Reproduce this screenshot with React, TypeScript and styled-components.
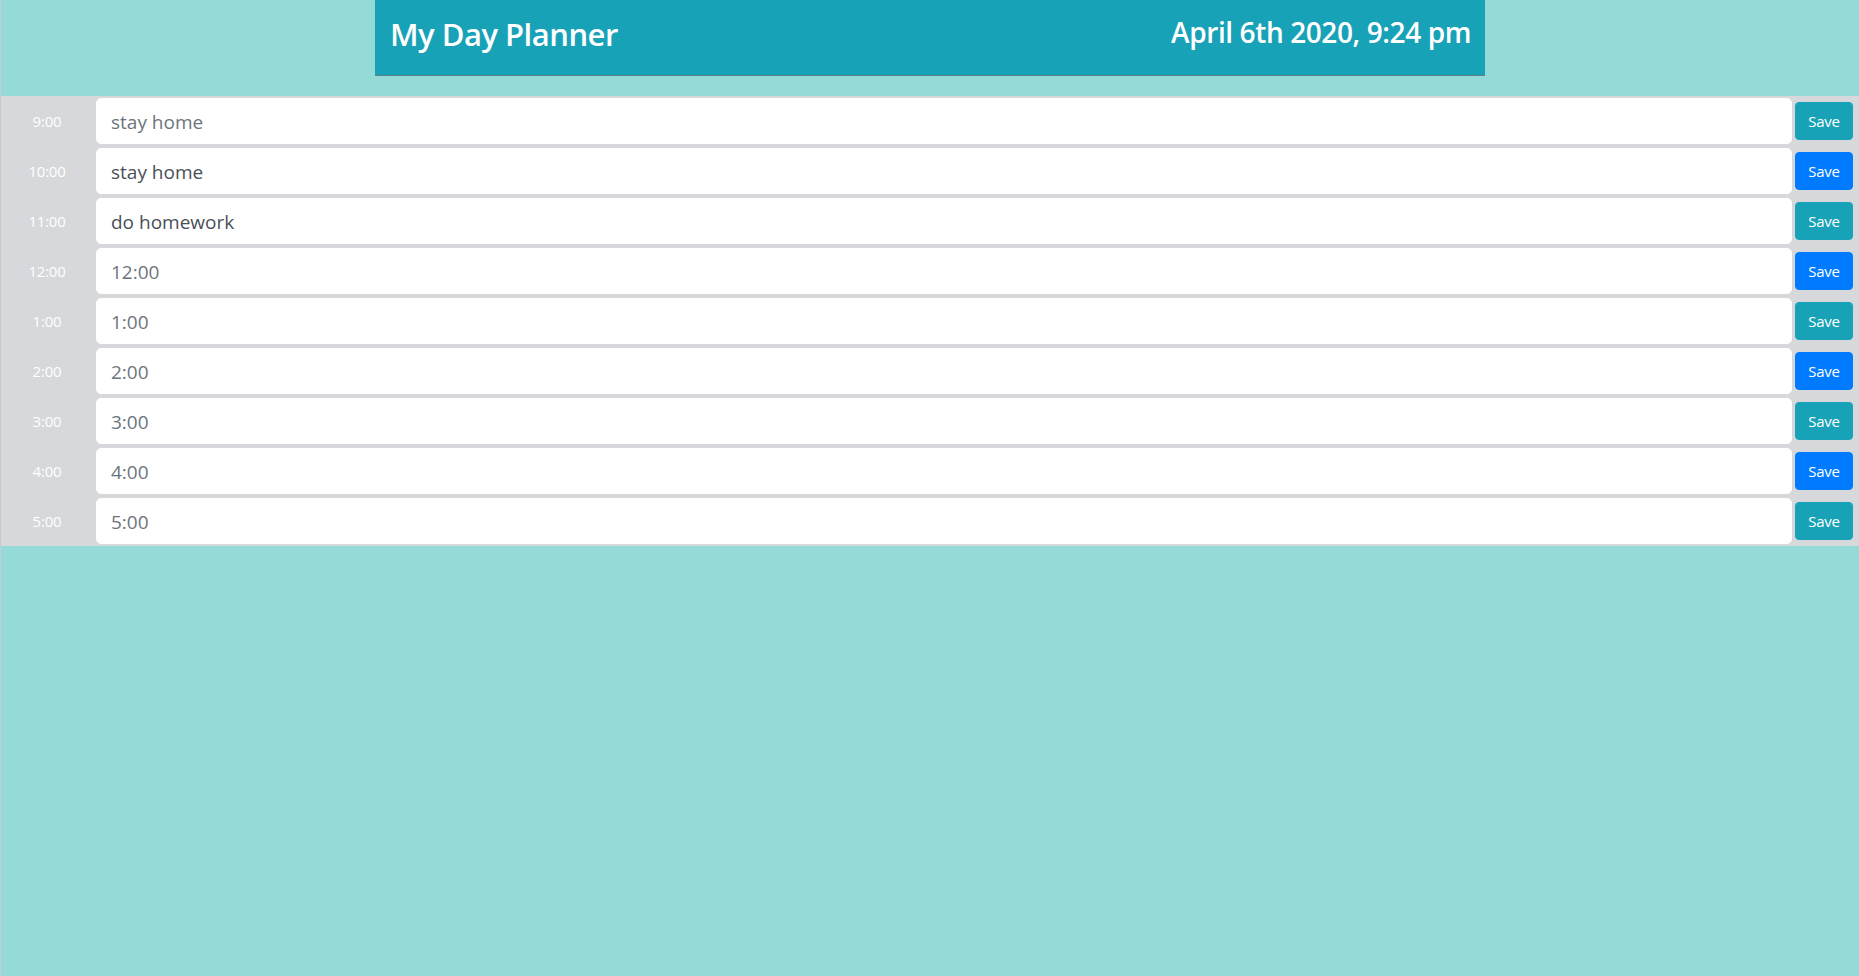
import React from "react";
import styled, { createGlobalStyle } from "styled-components";

const GlobalStyle = createGlobalStyle`
  html, body {
    margin: 0;
    padding: 0;
    background: #94dad6;
    min-height: 100%;
  }
  body {
    font-family: "Open Sans", "Noto Sans", Arial, sans-serif;
    color: #212529;
  }
  * { box-sizing: border-box; }
`;

const Page = styled.div`
  min-height: 100vh;
  border-left: 1px solid #bfcfcf;
`;

const HeaderOuter = styled.div`
  display: flex;
  justify-content: center;
  padding-bottom: 20px;
`;

const Header = styled.header`
  width: 1110px;
  height: 76px;
  background: #17a2b8;
  border-bottom: 1px solid #5d7f85;
  display: flex;
  justify-content: space-between;
  align-items: flex-start;
  padding: 16px 14px 0 15px;
  color: #fff;
`;

const Title = styled.h1`
  margin: 0;
  font-size: 31px;
  font-weight: 600;
  line-height: 1.2;
  letter-spacing: -0.5px;
`;

const DateText = styled.h3`
  margin: 0;
  font-size: 28px;
  font-weight: 600;
  line-height: 1.2;
  letter-spacing: -0.4px;
`;

const Schedule = styled.section`
  background: #d6d8db;
`;

const Row = styled.div`
  display: grid;
  grid-template-columns: 92px 1fr 58px;
  column-gap: 3px;
  align-items: center;
  height: 50px;
  padding: 2px 6px 2px 0;
`;

const Hour = styled.div`
  color: #fff;
  font-size: 15px;
  text-align: center;
  letter-spacing: -0.2px;
`;

const TaskInput = styled.input`
  height: 46px;
  width: 100%;
  border: 1px solid #fff;
  border-radius: 5px;
  background: #fff;
  padding: 2px 16px 0 14px;
  font-family: "Open Sans", "Noto Sans", Arial, sans-serif;
  font-size: 19px;
  color: #495057;
  outline: none;
  &::placeholder {
    color: #6c757d;
    opacity: 1;
  }
`;

const SaveButton = styled.button<{ $variant: "info" | "primary" }>`
  height: 38px;
  width: 58px;
  padding: 0;
  border: 1px solid ${(p) => (p.$variant === "info" ? "#17a2b8" : "#007bff")};
  background: ${(p) => (p.$variant === "info" ? "#17a2b8" : "#007bff")};
  color: #fff;
  border-radius: 4px;
  font-family: "Open Sans", "Noto Sans", Arial, sans-serif;
  font-size: 15px;
  letter-spacing: -0.2px;
  cursor: pointer;
`;

type Slot = { hour: string; value?: string; placeholder?: string };

const slots: Slot[] = [
  { hour: "9:00", placeholder: "stay home" },
  { hour: "10:00", value: "stay home" },
  { hour: "11:00", value: "do homework" },
  { hour: "12:00", placeholder: "12:00" },
  { hour: "1:00", placeholder: "1:00" },
  { hour: "2:00", placeholder: "2:00" },
  { hour: "3:00", placeholder: "3:00" },
  { hour: "4:00", placeholder: "4:00" },
  { hour: "5:00", placeholder: "5:00" },
];

export default function App() {
  return (
    <Page>
      <GlobalStyle />
      <HeaderOuter>
        <Header>
          <Title>My Day Planner</Title>
          <DateText>April 6th 2020, 9:24 pm</DateText>
        </Header>
      </HeaderOuter>
      <Schedule>
        {slots.map((s, i) => (
          <Row key={s.hour}>
            <Hour>{s.hour}</Hour>
            <TaskInput defaultValue={s.value} placeholder={s.placeholder} />
            <SaveButton $variant={i % 2 === 0 ? "info" : "primary"}>Save</SaveButton>
          </Row>
        ))}
      </Schedule>
    </Page>
  );
}
